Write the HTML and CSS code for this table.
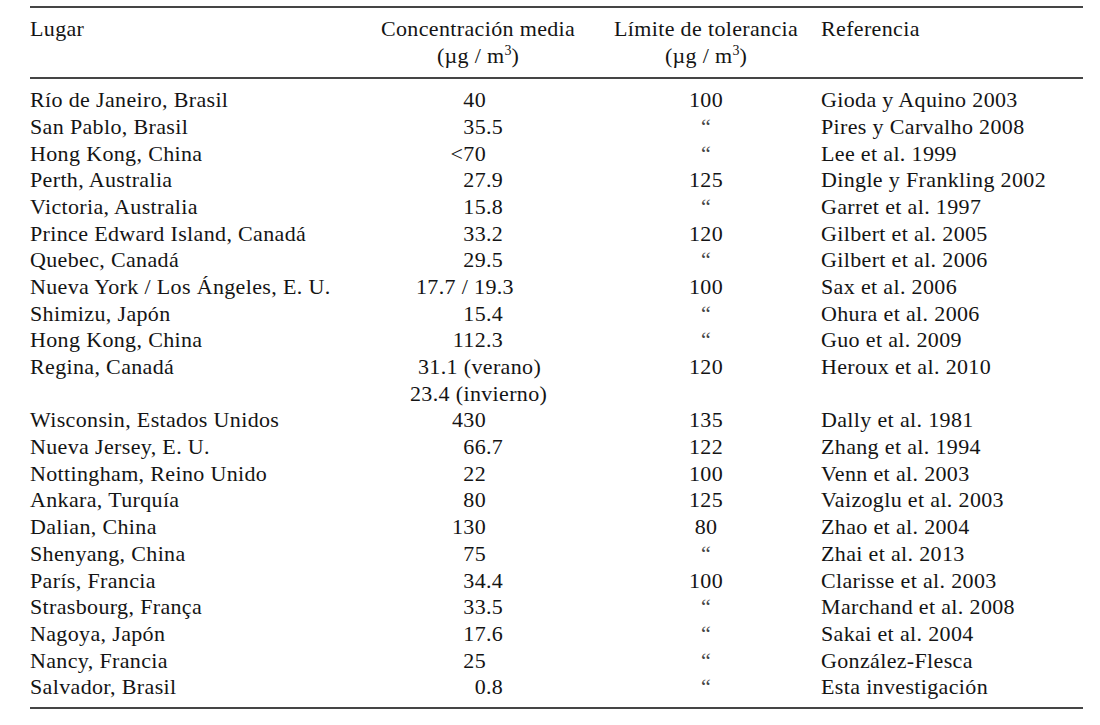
FILE: index.html
```html
<!DOCTYPE html>
<html lang="es">
<head>
<meta charset="utf-8">
<title>Concentración media</title>
<link rel="stylesheet" href="styles.css">
</head>
<body>
<div class="table">
  <div class="row head">
    <div class="c1">Lugar</div>
    <div class="c2"><div class="hd">Concentración media<br>(µg / m<sup>3</sup>)</div></div>
    <div class="c3"><div class="hd mid">Límite de tolerancia<br>(µg / m<sup>3</sup>)</div></div>
    <div class="c4">Referencia</div>
  </div>
  <div class="body">
    <div class="row"><div class="c1">Río de Janeiro, Brasil</div><div class="c2"><span class="int">40</span></div><div class="c3">100</div><div class="c4">Gioda y Aquino 2003</div></div>
    <div class="row"><div class="c1">San Pablo, Brasil</div><div class="c2"><span class="int">35</span>.5</div><div class="c3 dit">“</div><div class="c4">Pires y Carvalho 2008</div></div>
    <div class="row"><div class="c1">Hong Kong, China</div><div class="c2"><span class="int">&lt;70</span></div><div class="c3 dit">“</div><div class="c4">Lee et al. 1999</div></div>
    <div class="row"><div class="c1">Perth, Australia</div><div class="c2"><span class="int">27</span>.9</div><div class="c3">125</div><div class="c4">Dingle y Frankling 2002</div></div>
    <div class="row"><div class="c1">Victoria, Australia</div><div class="c2"><span class="int">15</span>.8</div><div class="c3 dit">“</div><div class="c4">Garret et al. 1997</div></div>
    <div class="row"><div class="c1">Prince Edward Island, Canadá</div><div class="c2"><span class="int">33</span>.2</div><div class="c3">120</div><div class="c4">Gilbert et al. 2005</div></div>
    <div class="row"><div class="c1">Quebec, Canadá</div><div class="c2"><span class="int">29</span>.5</div><div class="c3 dit">“</div><div class="c4">Gilbert et al. 2006</div></div>
    <div class="row"><div class="c1">Nueva York / Los Ángeles, E. U.</div><div class="c2"><span class="free ny">17.7 / 19.3</span></div><div class="c3">100</div><div class="c4">Sax et al. 2006</div></div>
    <div class="row"><div class="c1">Shimizu, Japón</div><div class="c2"><span class="int">15</span>.4</div><div class="c3 dit">“</div><div class="c4">Ohura et al. 2006</div></div>
    <div class="row"><div class="c1">Hong Kong, China</div><div class="c2"><span class="int">112</span>.3</div><div class="c3 dit">“</div><div class="c4">Guo et al. 2009</div></div>
    <div class="row"><div class="c1">Regina, Canadá</div><div class="c2"><span class="free ver">31.1 (verano)</span><br><span class="free inv">23.4 (invierno)</span></div><div class="c3">120</div><div class="c4">Heroux et al. 2010</div></div>
    <div class="row"><div class="c1">Wisconsin, Estados Unidos</div><div class="c2"><span class="int">430</span></div><div class="c3">135</div><div class="c4">Dally et al. 1981</div></div>
    <div class="row"><div class="c1">Nueva Jersey, E. U.</div><div class="c2"><span class="int">66</span>.7</div><div class="c3">122</div><div class="c4">Zhang et al. 1994</div></div>
    <div class="row"><div class="c1">Nottingham, Reino Unido</div><div class="c2"><span class="int">22</span></div><div class="c3">100</div><div class="c4">Venn et al. 2003</div></div>
    <div class="row"><div class="c1">Ankara, Turquía</div><div class="c2"><span class="int">80</span></div><div class="c3">125</div><div class="c4">Vaizoglu et al. 2003</div></div>
    <div class="row"><div class="c1">Dalian, China</div><div class="c2"><span class="int">130</span></div><div class="c3">80</div><div class="c4">Zhao et al. 2004</div></div>
    <div class="row"><div class="c1">Shenyang, China</div><div class="c2"><span class="int">75</span></div><div class="c3 dit">“</div><div class="c4">Zhai et al. 2013</div></div>
    <div class="row"><div class="c1">París, Francia</div><div class="c2"><span class="int">34</span>.4</div><div class="c3">100</div><div class="c4">Clarisse et al. 2003</div></div>
    <div class="row"><div class="c1">Strasbourg, França</div><div class="c2"><span class="int">33</span>.5</div><div class="c3 dit">“</div><div class="c4">Marchand et al. 2008</div></div>
    <div class="row"><div class="c1">Nagoya, Japón</div><div class="c2"><span class="int">17</span>.6</div><div class="c3 dit">“</div><div class="c4">Sakai et al. 2004</div></div>
    <div class="row"><div class="c1">Nancy, Francia</div><div class="c2"><span class="int">25</span></div><div class="c3 dit">“</div><div class="c4">González-Flesca</div></div>
    <div class="row"><div class="c1">Salvador, Brasil</div><div class="c2"><span class="int">0</span>.8</div><div class="c3 dit">“</div><div class="c4">Esta investigación</div></div>
  </div>
</div>
</body>
</html>
```
FILE: styles.css
```css
html, body {
  margin: 0;
  padding: 0;
  background: #ffffff;
}

body {
  font-family: "Liberation Serif", "Times New Roman", serif;
  font-size: 22px;
  letter-spacing: 0.35px;
  line-height: 26.68px;
  color: #141414;
}

.table {
  margin: 6px 0 0 30px;
  width: 1053px;
  border-top: 2px solid #454545;
  border-bottom: 2px solid #454545;
}

.row {
  display: grid;
  grid-template-columns: 351px 233px 207px 262px;
}

.head {
  padding: 8.2px 0 7.4px;
  border-bottom: 2px solid #454545;
}

.body {
  padding: 8.2px 0 6.2px;
}

.hd {
  width: fit-content;
  white-space: nowrap;
  text-align: center;
}

.mid {
  margin: 0 auto;
}

.c3 {
  padding-right: 23px;
  text-align: center;
}

.dit {
  font-size: 22px;
  letter-spacing: 0;
  color: #444444;
}

sup {
  font-size: 14px;
  line-height: 0;
  vertical-align: 8px;
  letter-spacing: 0;
}

.int {
  display: inline-block;
  width: 105px;
  text-align: right;
}

.free {
  display: inline-block;
}

.ny {
  padding-left: 35px;
}

.ver {
  padding-left: 37px;
}

.inv {
  padding-left: 29px;
}
```
